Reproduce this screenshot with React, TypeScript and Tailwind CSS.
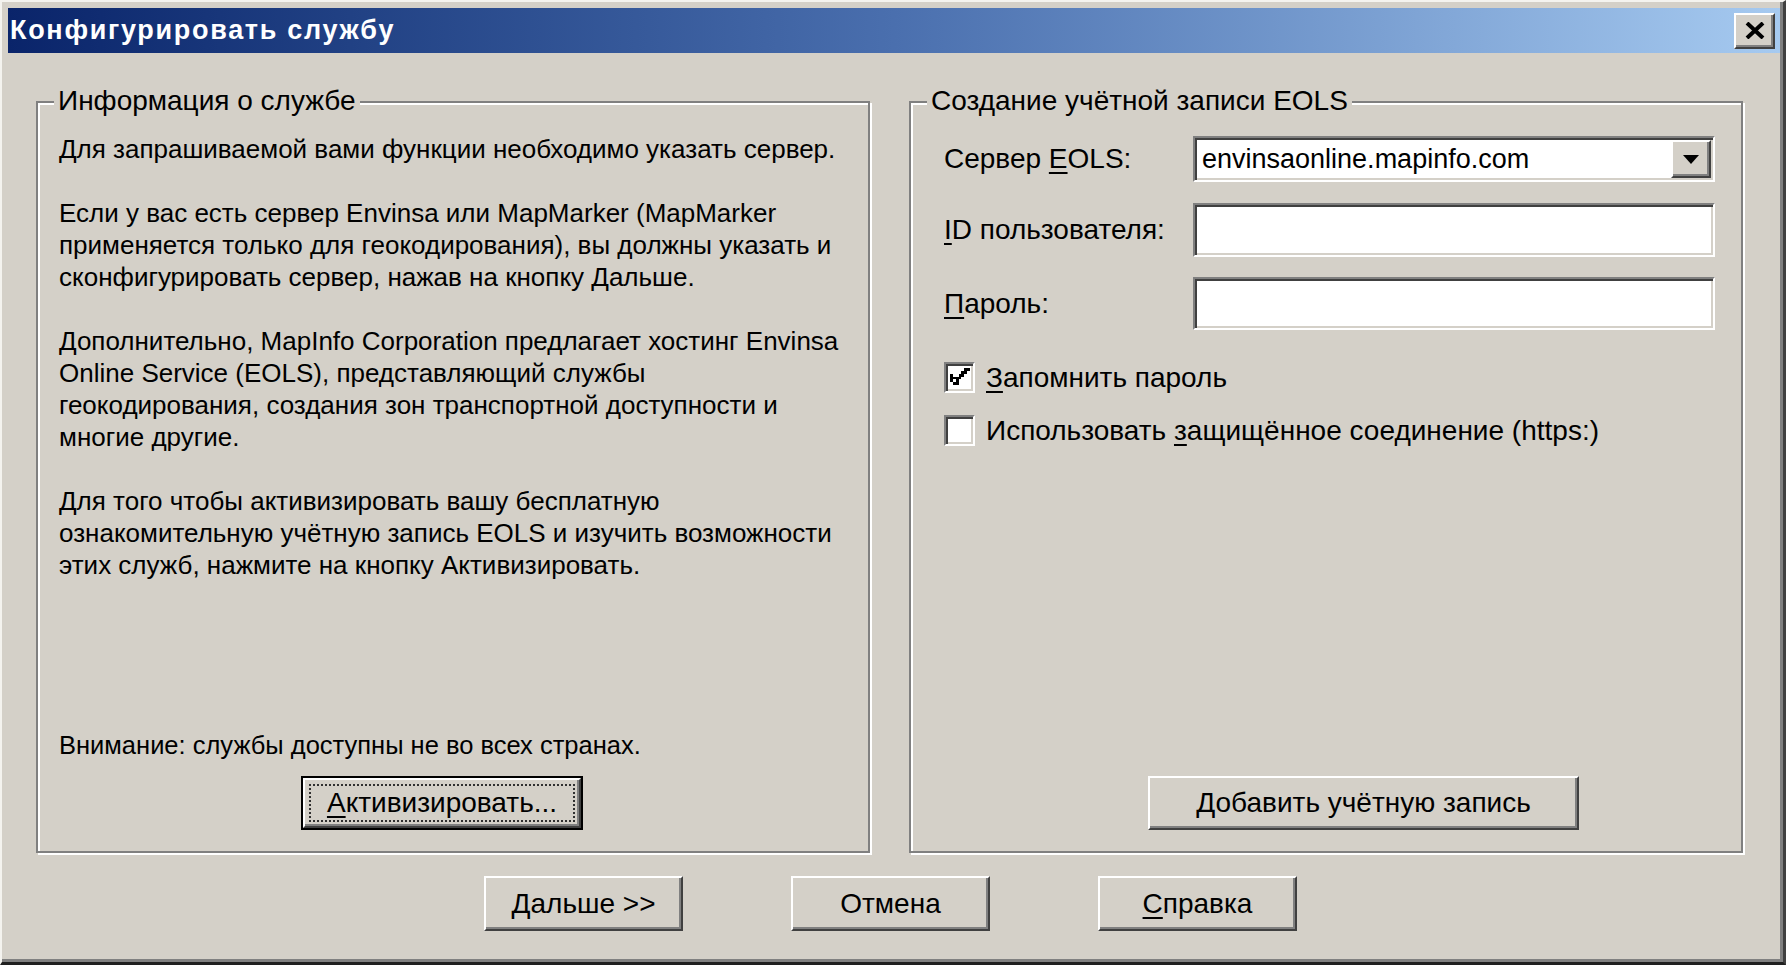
import type { ReactNode } from 'react'

const raised =
  'bg-[#d4d0c8] border-t-2 border-l-2 border-t-white border-l-white border-b-2 border-r-2 border-b-[#404040] border-r-[#404040] shadow-[inset_-2px_-2px_0_#808080]'
const sunken =
  'bg-white border-t-2 border-l-2 border-t-[#808080] border-l-[#808080] border-b-2 border-r-2 border-b-white border-r-white shadow-[inset_2px_2px_0_#404040,inset_-2px_-2px_0_#d4d0c8]'

function GroupBox({ title, className, children }: { title: string; className?: string; children: ReactNode }) {
  return (
    <div
      className={`relative w-[834px] h-[752px] border-2 border-[#808080] shadow-[inset_2px_2px_0_#ffffff,2px_2px_0_#ffffff] flex flex-col ${className ?? ''}`}
    >
      <span className="absolute left-[16px] top-[-18px] px-[4px] bg-[#d4d0c8] leading-[32px] whitespace-nowrap">
        {title}
      </span>
      {children}
    </div>
  )
}

function Button({ children, className }: { children: ReactNode; className?: string }) {
  return (
    <button className={`${raised} flex items-center justify-center leading-none ${className ?? ''}`}>
      {children}
    </button>
  )
}

function Key({ children }: { children: ReactNode }) {
  return <span className="underline decoration-2 underline-offset-[4px]">{children}</span>
}

function Checkbox({ checked }: { checked?: boolean }) {
  return (
    <div className={`${sunken} w-[31px] h-[31px] flex items-center justify-center shrink-0`}>
      {checked && (
        <svg width="20" height="20" viewBox="0 0 7 7" shapeRendering="crispEdges">
          <path d="M0 2h1v3h1v1H1v-1H0zM2 4h1v1H2zM3 3h1v1H3zM4 2h1v1H4zM5 1h1v1H5zM6 0h1v1H6zM1 3h1v1H1zM2 5h1v1H2zM2 3h1v1H2zM3 2h1v1H3zM4 1h1v1H4zM5 0h1v1H5z" fill="#000" />
        </svg>
      )}
    </div>
  )
}

const paragraphs: string[][] = [
  ['Для запрашиваемой вами функции необходимо указать сервер.'],
  [
    'Если у вас есть сервер Envinsa или MapMarker (MapMarker',
    'применяется только для геокодирования), вы должны указать и',
    'сконфигурировать сервер, нажав на кнопку Дальше.',
  ],
  [
    'Дополнительно, MapInfo Corporation предлагает хостинг Envinsa',
    'Online Service (EOLS), представляющий службы',
    'геокодирования, создания зон транспортной доступности и',
    'многие другие.',
  ],
  [
    'Для того чтобы активизировать вашу бесплатную',
    'ознакомительную учётную запись EOLS и изучить возможности',
    'этих служб, нажмите на кнопку Активизировать.',
  ],
]

export default function App() {
  return (
    <div className="w-[1786px] h-[965px] bg-[#d4d0c8] text-black text-[28px] font-['Liberation_Sans',Arial,sans-serif] border-t-2 border-l-2 border-t-[#f4f3ef] border-l-[#f4f3ef] border-b-[3px] border-r-[3px] border-b-[#202020] border-r-[#404040] shadow-[inset_-3px_-3px_0_#808080] pt-[6px] pl-[6px] pr-[3px] flex flex-col overflow-hidden">
      {/* title bar */}
      <div className="h-[45px] shrink-0 bg-linear-to-r from-[#0a246a] via-[#4a6fae] to-[#a6caf0] flex items-center justify-between pl-[2px] pr-[5px]">
        <span className="text-white font-bold text-[27px] leading-none tracking-[1.7px]">Конфигурировать службу</span>
        <button className={`${raised} w-[41px] h-[36px] flex items-center justify-center`}>
          <svg width="20" height="17" viewBox="0 0 20 17">
            <path d="M2 1 L18 16 M18 1 L2 16" stroke="#000" strokeWidth="4" />
          </svg>
        </button>
      </div>

      {/* group boxes */}
      <div className="flex gap-[39px] mt-[48px] pl-[28px]">
        <GroupBox title="Информация о службе">
          <div className="flex flex-col h-full pt-[30px] pl-[21px] pb-[21px] leading-[32px]">
            <div className="flex flex-col gap-[32px] text-[26px]">
              {paragraphs.map((p, i) => (
                <p key={i}>
                  {p.map((line, j) => (
                    <span key={j} className="block whitespace-nowrap">
                      {line}
                    </span>
                  ))}
                </p>
              ))}
            </div>
            <div className="mt-auto flex flex-col">
              <p className="whitespace-nowrap text-[25.5px]">Внимание: службы доступны не во всех странах.</p>
              <div className="mt-[15px] ml-[242px] w-[282px] h-[54px] border-2 border-black">
                <Button className="w-full h-full p-[4px]">
                  <span className="w-full h-full flex items-center justify-center border-2 border-dotted border-[#303030]">
                    <Key>А</Key>ктивизировать...
                  </span>
                </Button>
              </div>
            </div>
          </div>
        </GroupBox>

        <GroupBox title="Создание учётной записи EOLS">
          <div className="flex flex-col h-full pt-[33px] pl-[33px] pr-[26px] pb-[21px]">
            <div className="flex items-center h-[46px]">
              <span className="w-[249px] shrink-0">
                Сервер <Key>E</Key>OLS:
              </span>
              <div className={`${sunken} flex-1 h-full flex items-center pl-[7px] pr-[2px]`}>
                <span className="flex-1 text-[27px]">envinsaonline.mapinfo.com</span>
                <div className={`${raised} w-[40px] h-[38px] flex items-center justify-center`}>
                  <svg width="16" height="9" viewBox="0 0 16 9">
                    <path d="M0 0 H16 L8 9 Z" fill="#000" />
                  </svg>
                </div>
              </div>
            </div>
            <div className="flex items-center h-[54px] mt-[21px]">
              <span className="w-[249px] shrink-0">
                <Key>I</Key>D пользователя:
              </span>
              <div className={`${sunken} flex-1 h-full`} />
            </div>
            <div className="flex items-center h-[53px] mt-[20px]">
              <span className="w-[249px] shrink-0">
                <Key>П</Key>ароль:
              </span>
              <div className={`${sunken} flex-1 h-full`} />
            </div>
            <div className="flex items-center gap-[11px] h-[31px] mt-[32px] leading-[31px]">
              <Checkbox checked />
              <span>
                <Key>З</Key>апомнить пароль
              </span>
            </div>
            <div className="flex items-center gap-[11px] h-[31px] mt-[22px] leading-[31px]">
              <Checkbox />
              <span>
                Использовать <Key>з</Key>ащищённое соединение (https:)
              </span>
            </div>
            <Button className="mt-auto ml-[204px] w-[431px] h-[54px]">
              <span>
                <Key>Д</Key>обавить учётную запись
              </span>
            </Button>
          </div>
        </GroupBox>
      </div>

      {/* bottom buttons */}
      <div className="flex gap-[108px] mt-[23px] ml-[476px]">
        <Button className="w-[199px] h-[55px]">
          <span>
            <Key>Д</Key>альше &gt;&gt;
          </span>
        </Button>
        <Button className="w-[199px] h-[55px]">Отмена</Button>
        <Button className="w-[199px] h-[55px]">
          <span>
            <Key>С</Key>правка
          </span>
        </Button>
      </div>
    </div>
  )
}
